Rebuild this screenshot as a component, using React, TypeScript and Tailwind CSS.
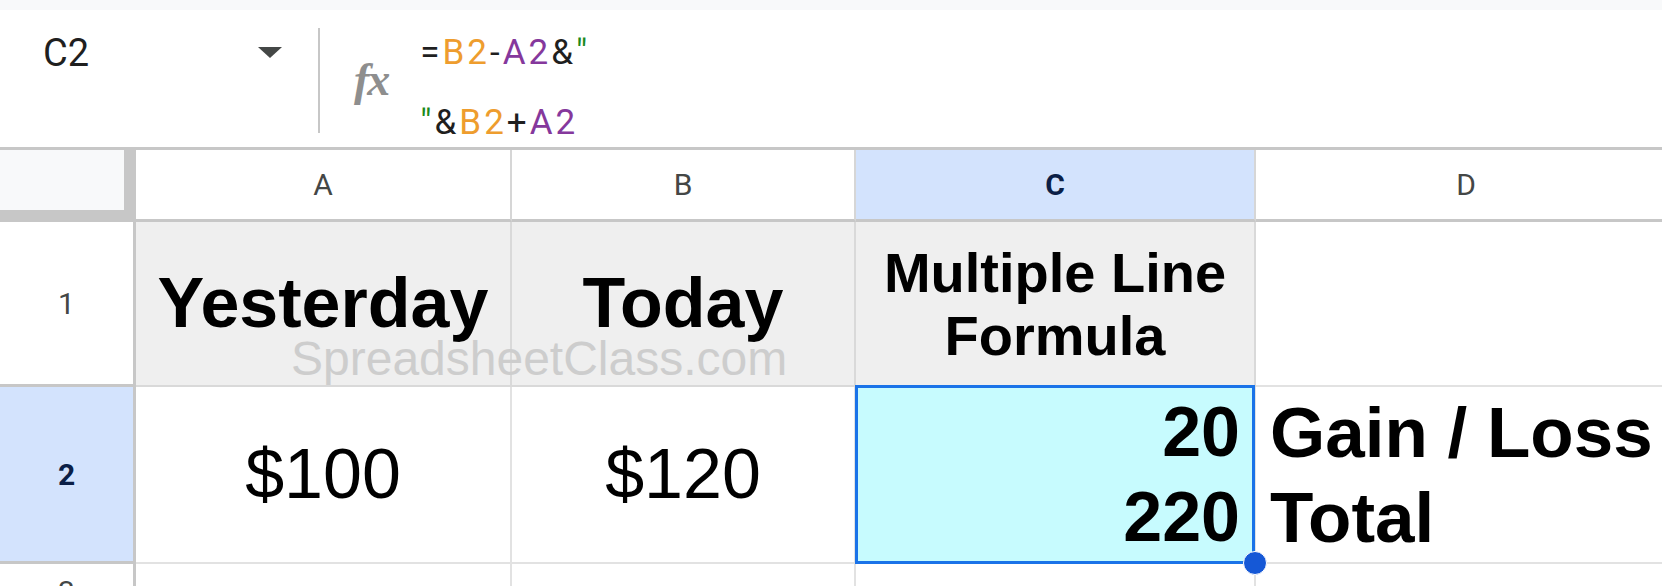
import React from "react";

const ORANGE = "text-[#ee9d2e]";
const PURPLE = "text-[#85389c]";
const GREEN = "text-[#1a8a1c]";

function FormulaBar() {
  return (
    <div className="h-[140px] flex items-start border-b-[3px] border-[#c7c7c7] bg-white">
      {/* Name box */}
      <div className="w-[318px] h-full flex items-start pl-[43px] pr-[36px] pt-[24px] shrink-0">
        <span className="text-[38px] leading-none text-[#1f1f1f]">C2</span>
        <div className="flex-1" />
        <svg width="24" height="11" viewBox="0 0 24 11" className="mt-[13px]">
          <path d="M0 0 L24 0 L12 11 Z" fill="#444746" />
        </svg>
      </div>
      <div className="w-[2px] h-[105px] mt-[18px] bg-[#c7c7c7] shrink-0" />
      {/* fx */}
      <div className="ml-[34px] mt-[47px] font-['Liberation_Serif',serif] italic font-bold text-[46px] leading-none text-[#8e8e8e] tracking-[-2px]">
        fx
      </div>
      {/* Formula */}
      <div className="ml-[32px] pt-[8px] text-[35px] leading-[70px] tracking-[3px] text-[#1f1f1f]">
        <div>
          =<span className={ORANGE}>B2</span>-<span className={PURPLE}>A2</span>&amp;
          <span className={GREEN}>"</span>
        </div>
        <div>
          <span className={GREEN}>"</span>&amp;<span className={ORANGE}>B2</span>+
          <span className={PURPLE}>A2</span>
        </div>
      </div>
    </div>
  );
}

function HeaderRow() {
  const base =
    "shrink-0 h-full flex items-center justify-center text-[30px] border-r-2 border-b-[3px] border-r-[#d6d6d6] border-b-[#c7c7c7]";
  return (
    <div className="flex h-[72px]">
      <div className="w-[136px] shrink-0 h-full bg-[#f8f9fa] border-r-[12px] border-b-[12px] border-[#c7c7c7]" />
      <div className={`${base} w-[376px] text-[#444746]`}>A</div>
      <div className={`${base} w-[344px] text-[#444746]`}>B</div>
      <div className={`${base} w-[400px] bg-[#d3e3fd] font-bold text-[#0b1f47]`}>C</div>
      <div className={`${base} w-[422px] text-[#444746]`}>D</div>
    </div>
  );
}

export default function App() {
  const cell = "shrink-0 h-full border-r-2 border-b-2 flex items-center font-['Liberation_Sans',Arial,sans-serif] text-black";
  return (
    <div className="w-[1662px] h-[586px] overflow-hidden relative bg-white font-['Roboto',sans-serif]">
      <div className="h-[10px] bg-[#f8f9fa]" />
      <FormulaBar />
      <HeaderRow />

      {/* Row 1 */}
      <div className="flex h-[165px]">
        <div className="w-[136px] shrink-0 h-full flex items-center justify-center border-r-[3px] border-b-[3px] border-[#c7c7c7] text-[30px] text-[#444746]">
          1
        </div>
        <div className={`${cell} w-[376px] justify-center bg-[#efefef] border-[#d9d9d9] font-bold text-[70px]`}>
          Yesterday
        </div>
        <div className={`${cell} w-[344px] justify-center bg-[#efefef] border-[#d9d9d9] font-bold text-[70px]`}>
          Today
        </div>
        <div className={`${cell} w-[400px] justify-center bg-[#efefef] border-[#d9d9d9] font-bold text-[56px] leading-[63px] text-center`}>
          Multiple Line
          <br />
          Formula
        </div>
        <div className={`${cell} w-[422px] border-[#e2e2e2]`} />
      </div>

      {/* Row 2 */}
      <div className="flex h-[177px]">
        <div className="w-[136px] shrink-0 h-full flex items-center justify-center bg-[#d3e3fd] border-r-[3px] border-b-[3px] border-[#c7c7c7] text-[30px] font-bold text-[#0b1f47]">
          2
        </div>
        <div className={`${cell} w-[376px] justify-center border-[#e2e2e2] text-[70px]`}>$100</div>
        <div className={`${cell} w-[344px] justify-center border-[#e2e2e2] text-[70px]`}>$120</div>
        <div className={`${cell} w-[400px] relative justify-end pr-[14px] bg-[#c7fbfe] border-[#e2e2e2] font-bold text-[70px] leading-[85px] text-right`}>
          <div>
            20
            <br />
            220
          </div>
          <div className="absolute top-[-2px] left-[-1px] right-[-1px] bottom-[-2px] border-[3px] border-[#1a73e8]" />
          <div className="absolute right-[-13px] bottom-[-13px] w-[24px] h-[24px] rounded-full bg-[#1558d6] border border-white z-10" />
        </div>
        <div className={`${cell} w-[422px] pl-[14px] border-[#e2e2e2] font-bold text-[71px] leading-[85px]`}>
          <div>
            Gain / Loss
            <br />
            Total
          </div>
        </div>
      </div>

      {/* Row 3 */}
      <div className="flex h-[40px]">
        <div className="w-[136px] shrink-0 h-full flex items-start justify-center pt-[13px] border-r-[3px] border-[#c7c7c7] text-[30px] leading-none text-[#444746]">
          3
        </div>
        <div className={`${cell} w-[376px] border-[#e2e2e2]`} />
        <div className={`${cell} w-[344px] border-[#e2e2e2]`} />
        <div className={`${cell} w-[400px] border-[#e2e2e2]`} />
        <div className={`${cell} w-[422px] border-[#e2e2e2]`} />
      </div>

      {/* Watermark */}
      <div className="absolute left-[291px] top-[335px] text-[48px] leading-none font-['Liberation_Sans',Arial,sans-serif] text-[#cdcdcd] pointer-events-none">
        SpreadsheetClass.com
      </div>
    </div>
  );
}
